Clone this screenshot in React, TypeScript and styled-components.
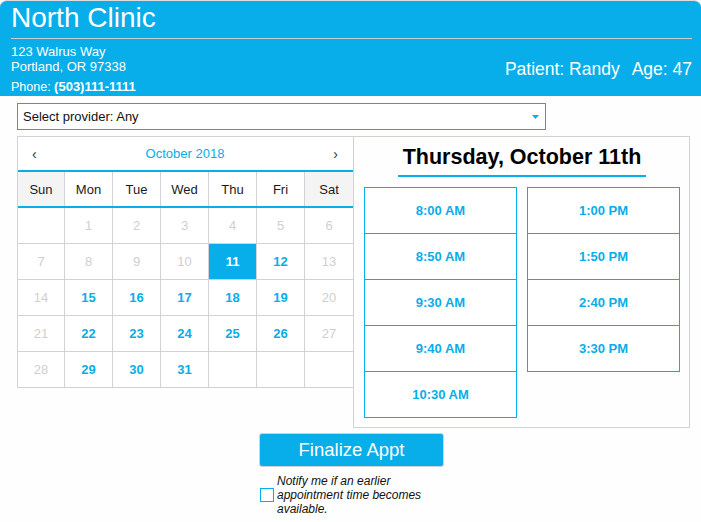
import React from "react";
import styled, { createGlobalStyle } from "styled-components";

const BLUE = "#07aeea";
const GRID = "#d3d1d6";

const GlobalStyle = createGlobalStyle`
  html, body { margin: 0; padding: 0; background: #fdfefd; }
  body { font-family: "Liberation Sans", Arial, Helvetica, sans-serif; color: #111; }
  * { box-sizing: border-box; }
`;

const Page = styled.div`
  width: 701px;
`;

const Header = styled.header`
  background: ${BLUE};
  color: #fff;
  border-top: 1px solid #dcdcdc;
  border-radius: 7px 7px 0 0;
  padding: 1px 9px 1px 11px;
`;

const ClinicName = styled.h1`
  margin: 0;
  font-size: 28px;
  line-height: 32px;
  font-weight: normal;
  padding-bottom: 4px;
  border-bottom: 1px solid #c9cdd0;
`;

const InfoRow = styled.div`
  display: flex;
  justify-content: space-between;
  align-items: flex-start;
  margin-top: 5px;
`;

const Address = styled.div`
  font-size: 13px;
  line-height: 15px;
`;

const Phone = styled.div`
  margin-top: 6px;
  height: 15px;
  font-size: 12.5px;
  b { font-weight: bold; font-size: 13px; line-height: 12px; }
`;

const Patient = styled.div`
  display: flex;
  gap: 12px;
  font-size: 17.5px;
  line-height: 20px;
  padding-top: 15px;
`;

const Main = styled.main`
  padding: 7px 0 0 17px;
`;

const Select = styled.div`
  position: relative;
  width: 529px;
  height: 27px;
  border: 1px solid ${BLUE};
  background: #fff;
  display: flex;
  align-items: center;
  padding-left: 5px;
  font-size: 13px;
  color: #111;
`;

const Caret = styled.svg`
  position: absolute;
  right: 6px;
  top: 11px;
`;

const BodyRow = styled.div`
  display: flex;
  align-items: flex-start;
  margin-top: 6px;
`;

const Calendar = styled.div`
  width: 337px;
  border: 1px solid ${GRID};
  background: #fff;
`;

const CalHeader = styled.div`
  height: 33px;
  display: flex;
  align-items: center;
  justify-content: space-between;
  padding: 0 15px 0 14px;
  font-size: 13px;
`;

const Arrow = styled.span`
  color: #333;
  font-size: 14px;
`;

const MonthLabel = styled.span`
  color: ${BLUE};
  font-size: 13px;
`;

const DayGrid = styled.div<{ $head?: boolean }>`
  display: grid;
  grid-template-columns: 46px repeat(5, 47px) 48px;
  grid-auto-rows: ${(p) => (p.$head ? "34px" : "35px")};
  gap: 1px;
  background: ${GRID};
  ${(p) => (p.$head ? `border-top: 2px solid ${BLUE}; border-bottom: 2px solid ${BLUE};` : "")}
`;

const DayName = styled.div<{ $weekend?: boolean }>`
  background: ${(p) => (p.$weekend ? "#f4f4f5" : "#fff")};
  display: flex;
  align-items: center;
  justify-content: center;
  font-size: 13px;
  color: #1a1a1a;
`;

type DayState = "empty" | "off" | "open" | "selected";

const DayCell = styled.div<{ $state: DayState }>`
  display: flex;
  align-items: center;
  justify-content: center;
  font-size: 13px;
  background: ${(p) => (p.$state === "selected" ? BLUE : "#fff")};
  color: ${(p) =>
    p.$state === "selected" ? "#fff" : p.$state === "open" ? BLUE : "#cfcfcf"};
  font-weight: ${(p) => (p.$state === "open" || p.$state === "selected" ? "bold" : "normal")};
`;

const Panel = styled.section`
  width: 337px;
  margin-left: -1px;
  border: 1px solid #d3d3d3;
  padding: 7px 9px 9px 10px;
  text-align: center;
  background: #fdfefd;
`;

const DayTitle = styled.h2`
  display: inline-block;
  margin: 0;
  font-size: 21.5px;
  line-height: 26px;
  font-weight: bold;
  color: #000;
  padding: 0 5px 5px;
  border-bottom: 2px solid ${BLUE};
`;

const Slots = styled.div`
  display: grid;
  grid-template-columns: 153px 153px;
  column-gap: 10px;
  align-items: start;
  margin-top: 10px;
`;

const SlotColumn = styled.div`
  display: flex;
  flex-direction: column;
`;

const Slot = styled.button`
  appearance: none;
  height: 47px;
  width: 153px;
  border: 1px solid ${BLUE};
  background: #fff;
  color: ${BLUE};
  font-family: inherit;
  font-size: 13px;
  font-weight: bold;
  padding: 0;
  display: flex;
  align-items: center;
  justify-content: center;
  & + & { margin-top: -1px; }
`;

const Footer = styled.div`
  width: 185px;
  margin: 5px 0 0 259px;
  display: flex;
  flex-direction: column;
`;

const FinalizeButton = styled.button`
  appearance: none;
  width: 185px;
  height: 34px;
  background: ${BLUE};
  color: #fff;
  border: 1px solid #c9d3d8;
  border-radius: 3px;
  font-family: inherit;
  font-size: 18.5px;
  padding: 0;
`;

const NotifyRow = styled.label`
  display: flex;
  align-items: center;
  gap: 3px;
  margin-top: 7px;
  padding-left: 1px;
`;

const CheckBox = styled.span`
  width: 14px;
  height: 14px;
  border: 1px solid ${BLUE};
  background: #fff;
  flex: none;
`;

const NotifyText = styled.span`
  width: 150px;
  font-size: 12px;
  line-height: 14px;
  font-style: italic;
  color: #111;
`;

const dayNames = ["Sun", "Mon", "Tue", "Wed", "Thu", "Fri", "Sat"];
const openDays = new Set([12, 15, 16, 17, 18, 19, 22, 23, 24, 25, 26, 29, 30, 31]);
const selectedDay = 11;

const cells: { n: number | null; state: DayState }[] = [];
cells.push({ n: null, state: "empty" });
for (let d = 1; d <= 31; d++) {
  cells.push({
    n: d,
    state: d === selectedDay ? "selected" : openDays.has(d) ? "open" : "off",
  });
}
while (cells.length < 35) cells.push({ n: null, state: "empty" });

const morning = ["8:00 AM", "8:50 AM", "9:30 AM", "9:40 AM", "10:30 AM"];
const afternoon = ["1:00 PM", "1:50 PM", "2:40 PM", "3:30 PM"];

export default function App() {
  return (
    <Page>
      <GlobalStyle />
      <Header>
        <ClinicName>North Clinic</ClinicName>
        <InfoRow>
          <Address>
            <div>123 Walrus Way</div>
            <div>Portland, OR 97338</div>
            <Phone>
              Phone: <b>(503)111-1111</b>
            </Phone>
          </Address>
          <Patient>
            <span>Patient: Randy</span>
            <span>Age: 47</span>
          </Patient>
        </InfoRow>
      </Header>
      <Main>
        <Select>
          Select provider: Any
          <Caret width="7" height="4" viewBox="0 0 7 4">
            <path d="M0 0 H7 L3.5 4 Z" fill={BLUE} />
          </Caret>
        </Select>
        <BodyRow>
          <Calendar>
            <CalHeader>
              <Arrow>‹</Arrow>
              <MonthLabel>October 2018</MonthLabel>
              <Arrow>›</Arrow>
            </CalHeader>
            <DayGrid $head>
              {dayNames.map((d, i) => (
                <DayName key={d} $weekend={i === 0 || i === 6}>
                  {d}
                </DayName>
              ))}
            </DayGrid>
            <DayGrid>
              {cells.map((c, i) => (
                <DayCell key={i} $state={c.state}>
                  {c.n ?? ""}
                </DayCell>
              ))}
            </DayGrid>
          </Calendar>
          <Panel>
            <DayTitle>Thursday, October 11th</DayTitle>
            <Slots>
              <SlotColumn>
                {morning.map((t) => (
                  <Slot key={t}>{t}</Slot>
                ))}
              </SlotColumn>
              <SlotColumn>
                {afternoon.map((t) => (
                  <Slot key={t}>{t}</Slot>
                ))}
              </SlotColumn>
            </Slots>
          </Panel>
        </BodyRow>
      </Main>
      <Footer>
        <FinalizeButton>Finalize Appt</FinalizeButton>
        <NotifyRow>
          <CheckBox />
          <NotifyText>Notify me if an earlier appointment time becomes available.</NotifyText>
        </NotifyRow>
      </Footer>
    </Page>
  );
}
